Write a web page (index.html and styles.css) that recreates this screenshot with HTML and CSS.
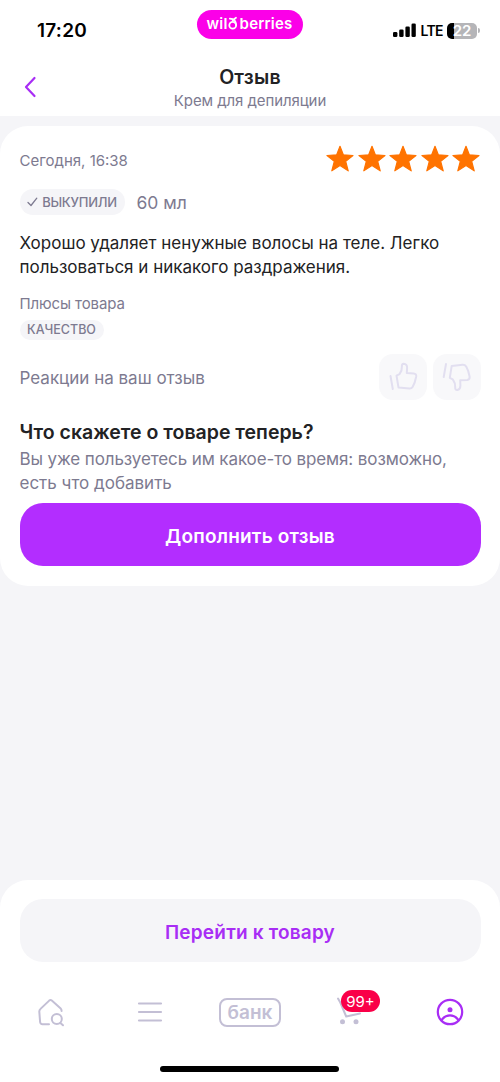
FILE: index.html
```html
<!DOCTYPE html>
<html lang="ru">
<head>
<meta charset="utf-8">
<meta name="viewport" content="width=device-width, initial-scale=1">
<title>Отзыв</title>
<link rel="stylesheet" href="styles.css">
</head>
<body>
<div class="screen">
  <header class="header">
    <div class="status">
      <span class="time">17:20</span>
      <span class="brand"><span class="brand-text">wil</span><svg class="brand-d" width="10" height="14" viewBox="0 0 10 14" fill="none" stroke="#fff" stroke-width="1.800" stroke-linecap="round"><circle cx="4.700" cy="9.300" r="3.400"/><path d="M8.100 9.300C8.100 5.600 5.800 2.800 1.800 2.600M4.700 4.200 8 1.800"/></svg><span class="brand-text">berries</span></span>
      <span class="indicators">
        <svg width="23" height="15" viewBox="0 0 23 15"><rect x="0" y="9" width="4.400" height="5" rx="1.300"/><rect x="6.200" y="6.500" width="4.400" height="7.500" rx="1.300"/><rect x="12.400" y="3.500" width="4.400" height="10.500" rx="1.300"/><rect x="18.500" y="0.500" width="4.300" height="13.500" rx="1.300"/></svg>
        <span class="lte">LTE</span>
        <span class="battery"><span class="level">22</span><span class="tip"></span></span>
      </span>
    </div>
    <div class="titlebar">
      <svg class="back" width="14" height="22" viewBox="0 0 14 22" fill="none" stroke="#a82df5" stroke-width="2.200" stroke-linecap="round" stroke-linejoin="round"><path d="M10.500 2 2 11l8.500 9"/></svg>
      <div class="titles">
        <h1 class="title">Отзыв</h1>
        <p class="subtitle">Крем для депиляции</p>
      </div>
    </div>
  </header>

  <main class="card">
    <div class="meta">
      <span class="date">Сегодня, 16:38</span>
      <span class="stars">
        <svg viewBox="0 0 28 27"><path d="M14 1.300 17.300 9.800 27 10.500 19.700 16.400 22.200 25.800 14 20.600 5.800 25.800 8.300 16.400 1 10.500 10.700 9.800Z"/></svg>
        <svg viewBox="0 0 28 27"><path d="M14 1.300 17.300 9.800 27 10.500 19.700 16.400 22.200 25.800 14 20.600 5.800 25.800 8.300 16.400 1 10.500 10.700 9.800Z"/></svg>
        <svg viewBox="0 0 28 27"><path d="M14 1.300 17.300 9.800 27 10.500 19.700 16.400 22.200 25.800 14 20.600 5.800 25.800 8.300 16.400 1 10.500 10.700 9.800Z"/></svg>
        <svg viewBox="0 0 28 27"><path d="M14 1.300 17.300 9.800 27 10.500 19.700 16.400 22.200 25.800 14 20.600 5.800 25.800 8.300 16.400 1 10.500 10.700 9.800Z"/></svg>
        <svg viewBox="0 0 28 27"><path d="M14 1.300 17.300 9.800 27 10.500 19.700 16.400 22.200 25.800 14 20.600 5.800 25.800 8.300 16.400 1 10.500 10.700 9.800Z"/></svg>
      </span>
    </div>
    <div class="purchase">
      <span class="bought"><svg width="11" height="10" viewBox="0 0 11 10" fill="none" stroke="#7d7a90" stroke-width="1.300" stroke-linecap="round" stroke-linejoin="round"><path d="M1 5.500 4 8.500 9.800 1.200"/></svg><span class="bought-text">ВЫКУПИЛИ</span></span>
      <span class="volume">60 мл</span>
    </div>
    <p class="review">Хорошо удаляет ненужные волосы на теле. Легко<br>пользоваться и никакого раздражения.</p>
    <p class="pros">Плюсы товара</p>
    <span class="tag">КАЧЕСТВО</span>
    <div class="reactions">
      <span class="reactions-label">Реакции на ваш отзыв</span>
      <span class="thumbs">
        <span class="thumb"><svg width="30" height="30" viewBox="0 0 30 30"><path d="M2.500 14 4.800 27M8.500 13.700 11.500 12.200Q14.200 8.500 13.900 4.500Q13.700 1.700 15.700 1.700Q19.200 2 19.100 5.700L18.800 11.100 25.700 11.500Q28.600 11.800 28.200 14.500Q27 21 24.600 25Q23.600 26.700 21.500 26.600L10.500 25.500Z"/></svg></span>
        <span class="thumb"><svg width="30" height="30" viewBox="0 0 30 30"><path d="M4 2 1.700 15M9.700 3.900 20.500 2.800Q22.900 2.600 24.200 4.600Q26.500 8.500 27.600 14.700Q28 17.600 25.200 18L18.200 18.300 18.400 23.800Q18.400 27.500 15.200 28Q13 28 13.200 25.200Q13.500 21 10.800 17.300L7.800 15.800Z"/></svg></span>
      </span>
    </div>
    <h2 class="question">Что скажете о товаре теперь?</h2>
    <p class="hint"><span class="hint-first">Вы уже пользуетесь им какое-то время: возможно,</span><br>есть что добавить</p>
    <button class="btn primary">Дополнить отзыв</button>
  </main>

  <footer class="bottom">
    <button class="btn secondary">Перейти к товару</button>
    <nav class="tabs">
      <span class="tab"><svg width="28" height="28" viewBox="0 0 28 28" fill="none" stroke="#c3bfd5" stroke-width="2" stroke-linecap="round" stroke-linejoin="round"><path d="M13 26.200H6.500Q4.300 26.200 4.100 24L3.300 13.700Q3.200 12 4.500 10.900L13.200 2.600Q14.500 1.500 15.800 2.600L24.700 10.400Q25.600 11.200 25.600 13"/><circle cx="20.800" cy="21" r="5"/><path d="m24.400 24.900 2.600 2.400"/></svg></span>
      <span class="tab"><svg width="26" height="22" viewBox="0 0 26 22" stroke="#c3bfd5" stroke-width="2.200" stroke-linecap="round"><path d="M2 2.500h22M2 11h22M2 19.500h22"/></svg></span>
      <span class="tab"><span class="bank">банк</span></span>
      <span class="tab"><span class="cart"><svg width="28" height="28" viewBox="0 0 28 28" fill="none" stroke="#c3bfd5" stroke-width="2" stroke-linecap="round" stroke-linejoin="round"><path d="M2 .5 4.300 4.500 10.200 18.500 24 15.500"/><circle cx="6.500" cy="23.700" r="2.500" fill="#c3bfd5" stroke="none"/><circle cx="20" cy="23.700" r="2.500" fill="#c3bfd5" stroke="none"/></svg><span class="count">99+</span></span></span>
      <span class="tab"><svg width="28" height="28" viewBox="0 0 28 28" fill="none" stroke="#a82df5" stroke-width="2.200" stroke-linecap="round"><circle cx="14" cy="14" r="12.200"/><circle cx="14" cy="11.700" r="2.500" fill="#a82df5" stroke="none"/><path d="M5.500 22.200C10 15.700 18 15.700 22.500 22.200"/></svg></span>
    </nav>
    <div class="home"></div>
  </footer>
</div>
</body>
</html>
```

FILE: styles.css
```css
* { box-sizing: border-box; }
body { margin: 0; font-family: Inter, "Liberation Sans", sans-serif; background: #f5f5f8; color: #222224; }
h1, h2, p { margin: 0; }
svg { display: block; flex: none; overflow: visible; }
.screen { width: 500px; height: 1082px; display: flex; flex-direction: column; overflow: hidden; white-space: nowrap; }

.header { height: 116px; background: #fff; }
.status { height: 60px; padding: 1px 20px 0 37px; display: grid; grid-template-columns: 1fr 106px 1fr; align-items: center; color: #000; }
.time { font-size: 19px; font-weight: 600; line-height: 24px; letter-spacing: 0.25px; }
.brand { width: 106px; height: 29px; margin: -13px 0 0 -9px; border-radius: 15px; background: #fb00e8; color: #fff; display: flex; align-items: center; justify-content: center; }
.brand-text { font-size: 15px; font-weight: 600; line-height: 24px; letter-spacing: 0.2px; }
.brand-d { margin: -3px 1.500px 0 0.500px; }
.indicators { display: flex; align-items: center; justify-content: flex-end; }
.lte { margin: 0 4px 0 4px; font-size: 14px; line-height: 20px; letter-spacing: -0.6px; font-weight: 600; }
.battery { display: flex; align-items: center; gap: 1px; }
.level { width: 30px; height: 16px; border-radius: 5px; background: linear-gradient(90deg, #000 7px, #b5b5b8 7px); color: #fff; font-size: 15px; font-weight: 600; line-height: 16px; text-align: center; }
.tip { width: 2px; height: 5px; border-radius: 0 2px 2px 0; background: #b5b5b8; }
.titlebar { height: 56px; padding: 4px 24px 0; display: grid; grid-template-columns: 14px 1fr 14px; }
.back { margin-top: 12px; }
.title { text-align: center; font-size: 19.5px; font-weight: 600; line-height: 26px; letter-spacing: 0.2px; }
.subtitle { text-align: center; font-size: 15px; line-height: 21px; letter-spacing: -0.08px; color: #7d7a90; }

.card { margin-top: 10px; height: 460px; padding: 19px 20px 0 19.500px; background: #fff; border-radius: 28px; }
.meta { height: 30px; display: flex; align-items: center; justify-content: space-between; color: #7d7a90; }
.date { font-size: 15px; }
.stars { display: flex; gap: 3.500px; margin-top: -3px; }
.stars svg { width: 28px; height: 27px; fill: #ff7300; stroke: #ff7300; stroke-width: 1.200; stroke-linejoin: round; }
.purchase { margin-top: 14px; height: 26px; display: flex; align-items: center; gap: 12px; color: #7d7a90; }
.bought { width: 105px; height: 26px; border-radius: 13px; background: #f5f5f8; display: flex; align-items: center; justify-content: center; gap: 4px; }
.bought-text { font-size: 13px; font-weight: 500; letter-spacing: -0.25px; }
.volume { font-size: 17.500px; }
.review { margin-top: 16px; font-size: 17px; line-height: 24.300px; }
.pros { margin-top: 14px; font-size: 15px; line-height: 20px; letter-spacing: -0.12px; color: #7d7a90; }
.tag { display: flex; align-items: center; justify-content: center; width: 84px; height: 20px; margin-top: 6px; border-radius: 10px; background: #f5f5f8; color: #7d7a90; font-size: 12.500px; font-weight: 500; }
.reactions { margin-top: 14px; height: 46px; display: flex; align-items: center; justify-content: space-between; color: #7d7a90; }
.reactions-label { padding-top: 2px; font-size: 17px; }
.thumbs { display: flex; gap: 6px; margin-right: -1px; }
.thumb { width: 48px; height: 46px; border-radius: 14px; background: #f8f8fa; display: grid; place-items: center; fill: none; stroke: #e2dff0; stroke-width: 2; stroke-linecap: round; stroke-linejoin: round; }
.question { margin-top: 19px; font-size: 19.500px; font-weight: 600; line-height: 26px; }
.hint { margin-top: 2px; font-size: 17px; line-height: 24.300px; color: #7d7a90; }
.hint-first { letter-spacing: -0.11px; }
.btn { display: block; width: 461px; height: 63px; padding: 2px 0 0; border: 0; border-radius: 23px; font: 600 19px/63px Inter, "Liberation Sans", sans-serif; letter-spacing: 0.2px; text-align: center; }
.primary { margin-top: 8px; background: #b32dff; color: #fff; }

.bottom { margin-top: auto; height: 202px; padding: 19px 20px 0 19.500px; background: #fff; border-radius: 28px 28px 0 0; }
.secondary { background: #f5f5f8; color: #a82df5; }
.tabs { margin: 29px -20px 0 -19.500px; height: 42px; display: grid; grid-template-columns: repeat(5, 1fr); }
.tab { display: grid; place-items: center; }
.bank { width: 62px; height: 29px; border: 2px solid #c3bfd5; border-radius: 8px; color: #c3bfd5; font-size: 19px; font-weight: 600; line-height: 25px; text-align: center; }
.cart { position: relative; }
.count { position: absolute; left: 5px; top: -8px; width: 39px; height: 22px; border-radius: 11px; background: #fa0048; color: #fff; font-size: 15px; line-height: 23px; text-align: center; }
.home { width: 179px; height: 6px; margin: 33px auto 0; border-radius: 3px; background: #000; }
```
